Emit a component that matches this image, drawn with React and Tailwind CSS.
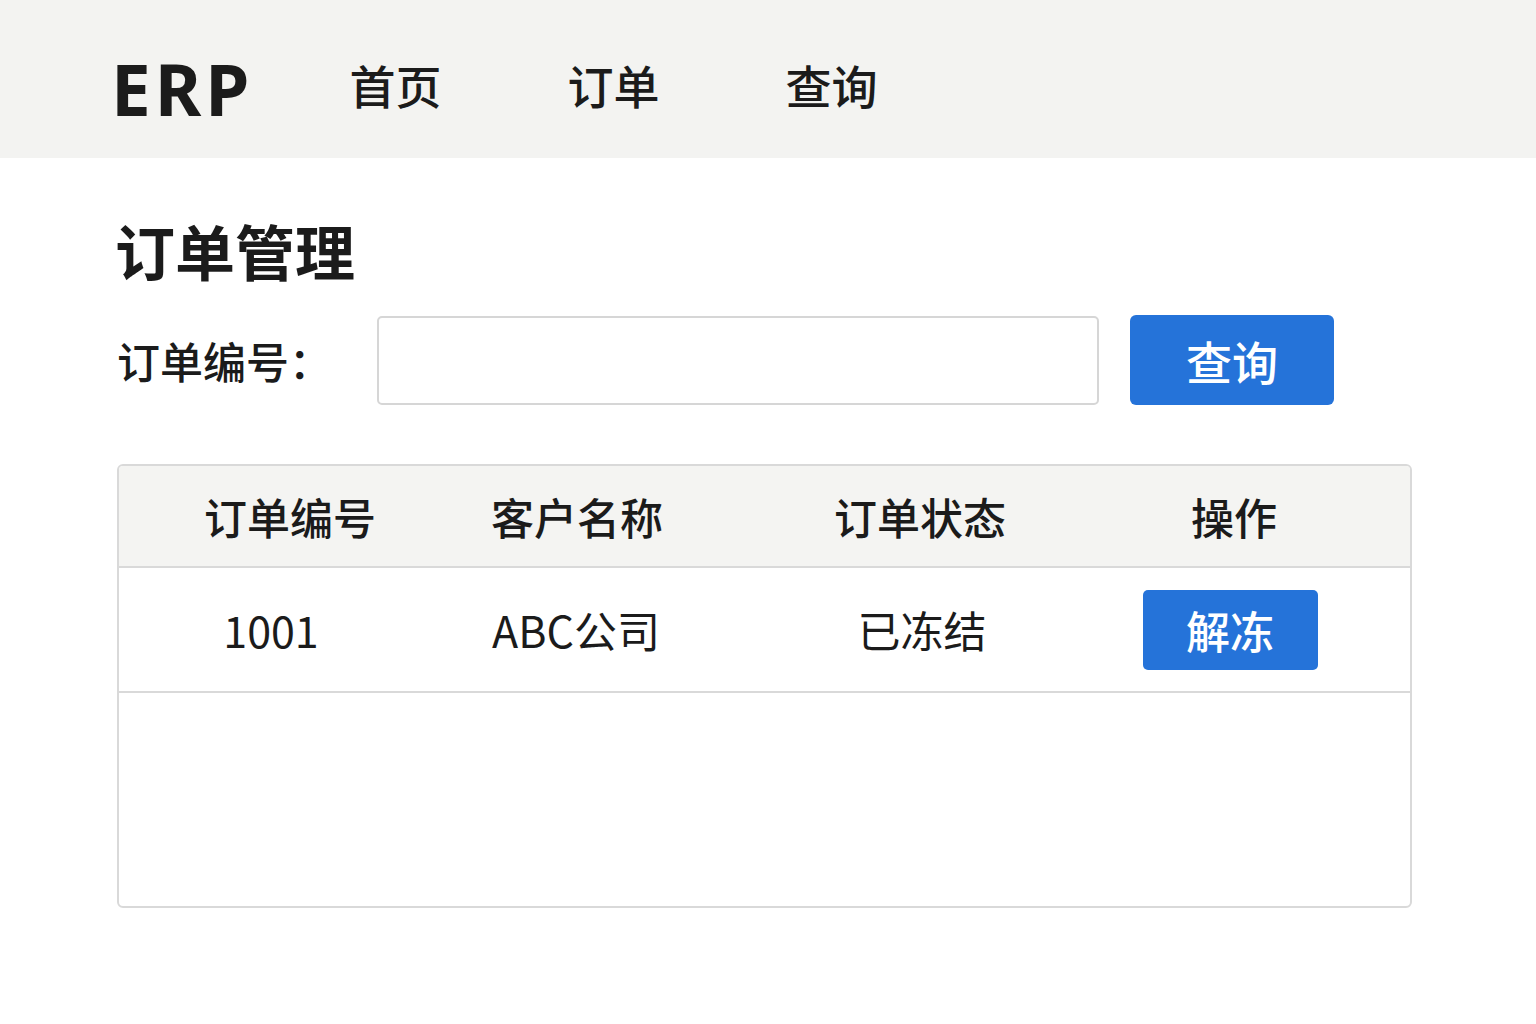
import React from 'react';

const cjk = { fontFamily: '"Noto Sans CJK SC", "Noto Sans", sans-serif' };

export default function App() {
  // 导航菜单
  const navItems = ["首页", "订单", "查询"];

  // 表格数据
  const orders = [{ id: "1001", customer: "ABC公司", status: "已冻结" }];

  return (
    <div className="min-h-[1024px] w-[1536px] bg-white text-[#1b1b1b]" style={cjk}>
      {/* 顶部导航 */}
      <header className="h-[158px] bg-[#f3f3f1] flex items-center pl-[111px]">
        <div className="text-[71px] font-bold tracking-[4px] leading-none mr-[96px] pt-[18px]" style={{ fontFamily: '"Noto Sans", sans-serif' }}>
          ERP
        </div>
        <nav className="flex gap-[126px] pt-[10px]">
          {navItems.map((item) => (
            <span key={item} className="text-[46px] font-medium leading-none w-[92px]">{item}</span>
          ))}
        </nav>
      </header>

      <main className="pl-[115px] pt-[56px]">
        {/* 标题 */}
        <h1 className="text-[60px] font-bold leading-none h-[72px] flex items-center">订单管理</h1>

        {/* 搜索栏 */}
        <div className="flex items-center mt-[29px]">
          <label className="text-[43px] font-medium w-[262px] pl-[2px]">订单编号：</label>
          <input className="w-[722px] h-[89px] border-2 border-[#d6d6d6] rounded-[5px] bg-white outline-none" />
          <button className="ml-[31px] w-[204px] h-[90px] bg-[#2573d9] text-white text-[46px] font-medium rounded-[6px]">
            查询
          </button>
        </div>

        {/* 订单表格 */}
        <div className="mt-[59px] ml-[2px] w-[1295px] h-[444px] border-2 border-[#d9d9d9] rounded-[6px] overflow-hidden">
          <div className="grid grid-cols-[326px_268px_418px_206px] h-[102px] bg-[#f4f4f2] border-b-2 border-[#d9d9d9] items-center text-[43px] font-medium">
            <div className="text-center pl-[16px]">订单编号</div>
            <div className="text-center pr-[4px]">客户名称</div>
            <div className="text-center pr-[4px]">订单状态</div>
            <div className="text-center">操作</div>
          </div>
          {orders.map((o) => (
            <div key={o.id} className="grid grid-cols-[326px_268px_418px_206px] h-[125px] border-b-2 border-[#d9d9d9] items-center text-[43px]">
              <div className="text-center pr-[22px]">{o.id}</div>
              <div className="text-center pr-[6px]">{o.customer}</div>
              <div className="text-center">{o.status}</div>
              <div className="flex justify-center pr-[8px]">
                <button className="w-[175px] h-[80px] bg-[#2573d9] text-white text-[44px] font-medium rounded-[5px]">
                  解冻
                </button>
              </div>
            </div>
          ))}
        </div>
      </main>
    </div>
  );
}
